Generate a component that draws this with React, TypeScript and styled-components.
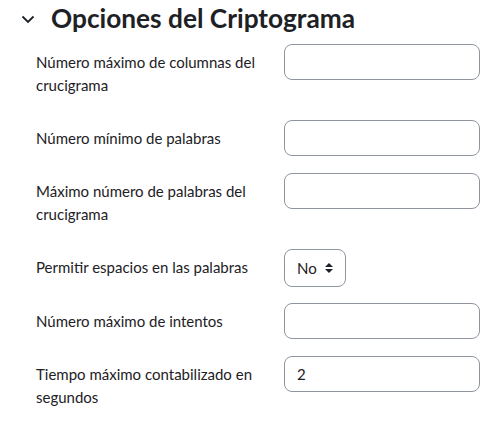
import React from "react";
import styled, { createGlobalStyle } from "styled-components";

const Global = createGlobalStyle`
  html, body { margin: 0; padding: 0; background: #fff; }
  body { font-family: Lato, "Noto Sans", sans-serif; color: #1d2125; }
`;

const Page = styled.div`
  width: 503px;
  height: 428px;
  overflow: hidden;
  box-sizing: border-box;
  padding-top: 2px;
`;

const Header = styled.div`
  display: flex;
  align-items: center;
  height: 34px;
  padding-left: 21px;
  gap: 16px;
`;

const Chevron = styled.svg`
  width: 14px;
  height: 9px;
  flex: none;
`;

const Title = styled.h3`
  margin: 0;
  font-size: 26.25px;
  font-weight: 700;
  line-height: 1.2;
  color: #1d2125;
`;

const Form = styled.div`
  display: flex;
  flex-direction: column;
  gap: 16px;
  padding-top: 8px;
  padding-left: 36px;
`;

const Row = styled.div`
  display: grid;
  grid-template-columns: 248px 196px;
  align-items: start;
`;

const Label = styled.label`
  font-size: 15px;
  line-height: 23px;
  padding: 7px 20px 7px 0;
  color: #1d2125;
`;

const Input = styled.div`
  box-sizing: border-box;
  height: 36px;
  border: 1px solid #8f959e;
  border-radius: 8px;
  padding: 0 12px;
  display: flex;
  align-items: center;
  font-size: 15px;
  color: #1d2125;
`;

const Select = styled.div`
  box-sizing: border-box;
  width: 62px;
  height: 38px;
  border: 1px solid #8f959e;
  border-radius: 8px;
  padding: 0 0 0 12px;
  display: flex;
  align-items: center;
  gap: 8px;
  font-size: 15px;
  color: #1d2125;
`;

const SortIcon = styled.svg`
  width: 8px;
  height: 10px;
`;

const rows: { label: string; kind: "input" | "select"; value?: string }[] = [
  { label: "Número máximo de columnas del crucigrama", kind: "input" },
  { label: "Número mínimo de palabras", kind: "input" },
  { label: "Máximo número de palabras del crucigrama", kind: "input" },
  { label: "Permitir espacios en las palabras", kind: "select", value: "No" },
  { label: "Número máximo de intentos", kind: "input" },
  { label: "Tiempo máximo contabilizado en segundos", kind: "input", value: "2" },
];

export default function App() {
  return (
    <Page>
      <Global />
      <Header>
        <Chevron viewBox="0 0 14 9">
          <path d="M1.5 1.5 L7 7 L12.5 1.5" fill="none" stroke="#1d2125" strokeWidth="1.8" />
        </Chevron>
        <Title>Opciones del Criptograma</Title>
      </Header>
      <Form>
        {rows.map((r) => (
          <Row key={r.label}>
            <Label>{r.label}</Label>
            {r.kind === "input" ? (
              <Input>{r.value}</Input>
            ) : (
              <Select>
                {r.value}
                <SortIcon viewBox="0 0 8 10">
                  <path d="M4 0 L8 4 L0 4 Z M0 6 L8 6 L4 10 Z" fill="#1d2125" />
                </SortIcon>
              </Select>
            )}
          </Row>
        ))}
      </Form>
    </Page>
  );
}
